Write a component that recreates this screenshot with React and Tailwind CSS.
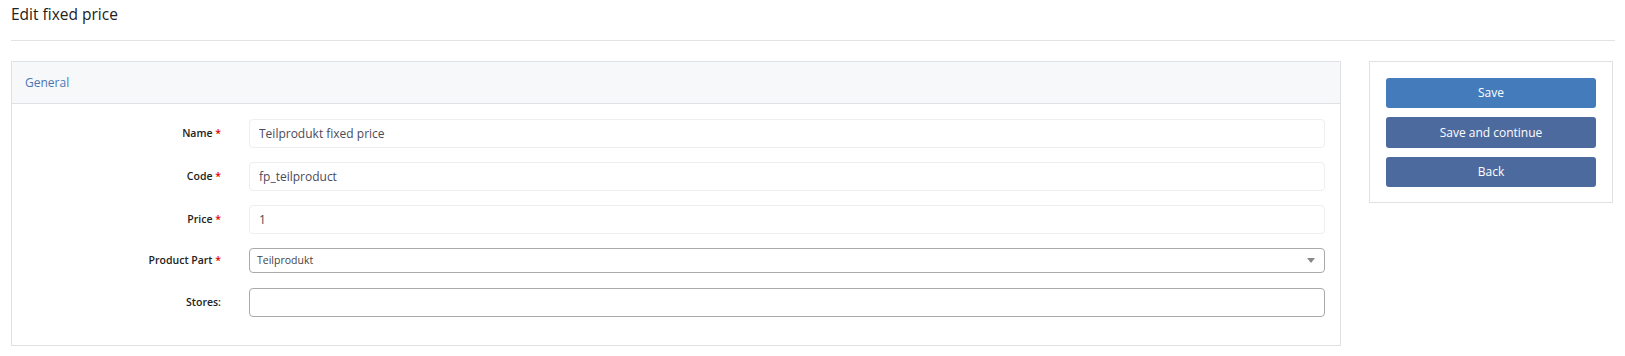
import React from 'react';

const fields = [
  { label: 'Name', required: true, value: 'Teilprodukt fixed price' },
  { label: 'Code', required: true, value: 'fp_teilproduct' },
  { label: 'Price', required: true, value: '1' },
];

export default function App() {
  return (
    <div className="min-h-screen bg-white pl-[11px] pr-[10px] text-[#333]" style={{ fontFamily: '"Open Sans", "Liberation Sans", sans-serif' }}>
      {/* page title */}
      <div className="h-[41px] border-b border-[#e3e3e3] pt-[2px]">
        <h1 className="text-[15.5px] leading-[24px] font-medium text-[#222]">Edit fixed price</h1>
      </div>

      <div className="flex gap-[28px] mt-[20px]">
        {/* general panel */}
        <div className="w-[1330px] border border-[#dfe1e5] bg-white">
          <div className="h-[42px] bg-[#f7f8fa] border-b border-[#dfe1e5] flex items-center px-[13px]">
            <span className="text-[12px] text-[#4a76b4]">General</span>
          </div>

          <div className="pt-[15px] pb-[28px] pr-[15px] flex flex-col">
            {fields.map((f) => (
              <div key={f.label} className="flex items-center gap-[28px] mb-[14px]">
                <label className="w-[209px] text-right text-[10.5px] font-semibold text-[#222]">
                  {f.label}{f.required && <span className="text-[#e60000]"> *</span>}
                </label>
                <input
                  readOnly
                  value={f.value}
                  className="flex-1 h-[29px] border border-[#eeeeee] rounded-[4px] px-[9px] text-[12px] text-[#4a4a5a] outline-none"
                />
              </div>
            ))}

            <div className="flex items-center gap-[28px] mb-[15px]">
              <label className="w-[209px] text-right text-[10.5px] font-semibold text-[#222]">
                Product Part<span className="text-[#e60000]"> *</span>
              </label>
              <div className="flex-1 h-[25px] border border-[#aaaaaa] rounded-[4px] px-[7px] flex items-center justify-between">
                <span className="text-[10.5px] text-[#444]">Teilprodukt</span>
                <span className="w-0 h-0 border-l-[4px] border-r-[4px] border-t-[5px] border-l-transparent border-r-transparent border-t-[#888] mr-[2px]"></span>
              </div>
            </div>

            <div className="flex items-center gap-[28px]">
              <label className="w-[209px] text-right text-[10.5px] font-semibold text-[#222]">Stores:</label>
              <div className="flex-1 h-[29px] border border-[#aaaaaa] rounded-[4px]"></div>
            </div>
          </div>
        </div>

        {/* actions panel */}
        <div className="w-[244px] self-start border border-[#dfe1e5] px-[16px] pt-[16px] pb-[15px] flex flex-col gap-[9px]">
          <button className="h-[30px] w-full rounded-[3px] bg-[#437bbb] text-white text-[12px]">Save</button>
          <button className="h-[31px] w-full rounded-[3px] bg-[#4d6a9f] text-white text-[12px]">Save and continue</button>
          <button className="h-[30px] w-full rounded-[3px] bg-[#4d6a9f] text-white text-[12px]">Back</button>
        </div>
      </div>
    </div>
  );
}
